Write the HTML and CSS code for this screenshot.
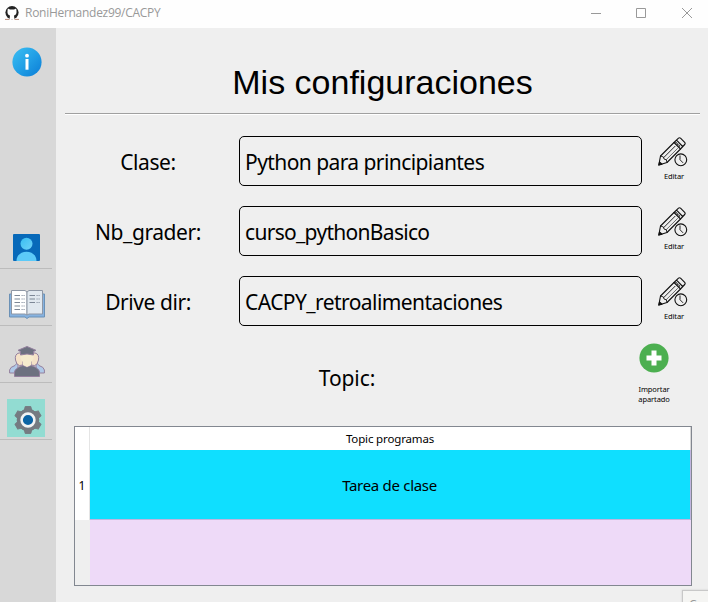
FILE: index.html
```html
<!DOCTYPE html>
<html lang="es">
<head>
<meta charset="utf-8">
<title>RoniHernandez99/CACPY</title>
<link rel="stylesheet" href="styles.css">
</head>
<body>
<svg width="0" height="0" class="defs">
  <defs>
    <linearGradient id="blue" x1="0" y1="0" x2="1" y2="1"><stop offset="0.2" stop-color="#32b3ee"/><stop offset="0.5" stop-color="#22a0e6"/><stop offset="1" stop-color="#0a7cd6"/></linearGradient>
    <linearGradient id="head" x1="0" y1="0" x2="1" y2="1"><stop offset="0" stop-color="#38bdf2"/><stop offset="1" stop-color="#6fd2f8"/></linearGradient>
    <symbol id="edit" viewBox="0 0 30 30">
      <g fill="none" stroke="#111" stroke-width="1.1" stroke-linejoin="round" stroke-linecap="round">
        <path d="M.8 28 2.500 19 16 5.500 22.500 12 9 25.500Z"/>
        <path d="M2.500 19 5.500 20 6 22 8.300 22.800 9 25.500M6 20.300 17 9.300" stroke-width=".9"/>
        <path d="M8.300 22.600 19.500 11.500" stroke-width=".6"/>
        <path d="M16 5.500 20.500 1.200Q21.500.300 22.500 1.200L26.700 5.400Q27.600 6.400 26.700 7.500L22.500 12M18.500 3.200 24.700 9.500"/>
        <path d="M17.800 5.300 22.500 10" stroke-dasharray=".8 1.500"/>
        <path d="M.8 28 1.500 25 4 27.200Z" fill="#111"/>
        <circle cx="22.800" cy="22.800" r="5.900" fill="#efefef"/>
        <path d="M22 18.800V22.700L24.800 25.600" stroke-width=".9"/>
      </g>
    </symbol>
  </defs>
</svg>
<header class="titlebar">
  <svg class="app-icon" viewBox="0 0 14 14"><rect width="14" height="14" fill="#fff"/><circle cx="7" cy="6.600" r="6.600" fill="#222"/><path d="M2.800 2.600 5 3.400H9L11.200 2.600 11.500 5Q11.900 8.800 9 9.400L9.400 13H4.600L5 9.400Q2.100 8.800 2.500 5Z" fill="#fff"/><path d="M0 13.400H4.500M9.500 13.400H14" stroke="#b98b79" stroke-width="1"/></svg>
  <span class="app-title">RoniHernandez99/CACPY</span>
  <svg class="controls" viewBox="0 0 104 14" fill="none" stroke="#999" stroke-width="1"><path d="M0 7.500H10M45.500 2.500H54.500V11.500H45.500ZM91 2 101 12M101 2 91 12"/></svg>
</header>
<div class="body">
  <nav class="sidebar">
    <div class="item info"><svg width="30" height="30" viewBox="0 0 30 30"><circle cx="15" cy="15" r="14.600" fill="url(#blue)"/><circle cx="15" cy="8.700" r="1.900" fill="#fff"/><path d="M13.500 12H16.500V22.700H13.500Z" fill="#fff"/></svg></div>
    <div class="item person"><svg width="27" height="27" viewBox="0 0 27 27"><rect width="27" height="27" rx="1" fill="#0769b9"/><circle cx="13.500" cy="9.700" r="6" fill="url(#head)"/><path d="M3.500 27C3.500 14.500 23.500 14.500 23.500 27Z" fill="#5ccaf8"/></svg></div>
    <div class="item"><svg width="36" height="30" viewBox="0 0 36 30"><path d="M.5 5H35.500V28H20L18 29.500 16 28H.5Z" fill="#86b2e0" stroke="#6b91b6"/><path d="M2.500 1.500H16L18 3V26L16 25H2.500Z" fill="#fff" stroke="#8e97a5"/><path d="M18 3 20 1.500H33.500V25H20L18 26Z" fill="#e1e8ef" stroke="#8e97a5"/><path d="M5.500 6.500H11M5.500 10H11M5.500 13.500H11M5.500 17H11M5.500 20.500H11M20.500 6.500H26M20.500 10H26M20.500 13.500H26" stroke="#7d8796" stroke-width="1.100"/><path d="M12.500 6.500H16M12.500 10H16M12.500 13.500H16M12.500 17H16M12.500 20.500H16M27.500 6.500H31M27.500 10H31M27.500 13.500H31" stroke="#8993a2" stroke-dasharray="1.200 .8"/></svg></div>
    <div class="item group"><svg width="36" height="33" viewBox="0 0 36 33"><g stroke="#94809e" stroke-width="1" stroke-linejoin="round"><path d="M.6 28V25Q1 22 6 20.500L9 17V28ZM35.400 28V25Q35 22 30 20.500L27 17V28Z" fill="#afc9e8"/><path d="M10 8Q5.500 9 6.500 15L8 19Q10 21.500 14 20V8ZM26 8Q30.500 9 29.500 15L28 19Q26 21.500 22 20V8Z" fill="#f5e2c8"/><path d="M5.500 31.500V27Q6 23 14 20.500L18 22 22 20.500Q30 23 30.500 27V31.500Z" fill="#6d7180"/></g><path d="M11.500 9Q10.500 14 14 17V20L18 22 22 20V17Q25.500 14 24.500 9Z" fill="#f6ebcd"/><path d="M9 5.300 18 1.500 27 5.300 24.500 6.500V10Q18 8 11.500 10V6.500Z" fill="#6d7180" stroke="#94809e" stroke-linejoin="round"/></svg></div>
    <div class="item gear"><div class="active"><svg width="30" height="30" viewBox="0 0 30 30"><g fill="#757b82" stroke="#757b82" stroke-linejoin="round"><circle cx="15" cy="15" r="10.800"/><path id="tooth" d="M8.500 7 11.300 5.500 12.200 1.600H17.800L18.700 5.500 21.500 7Z"/><use href="#tooth" transform="rotate(60 15 15)"/><use href="#tooth" transform="rotate(120 15 15)"/><use href="#tooth" transform="rotate(180 15 15)"/><use href="#tooth" transform="rotate(240 15 15)"/><use href="#tooth" transform="rotate(300 15 15)"/></g><circle cx="15" cy="15" r="6.400" fill="#0c64a5" stroke="#f1f3f4" stroke-width="2.600"/></svg></div></div>
  </nav>
  <main>
    <h1>Mis configuraciones</h1>
    <div class="row"><label>Clase:</label><div class="field">Python para principiantes</div><div class="edit"><svg><use href="#edit"/></svg>Editar</div></div>
    <div class="row"><label>Nb_grader:</label><div class="field grader">curso_pythonBasico</div><div class="edit"><svg><use href="#edit"/></svg>Editar</div></div>
    <div class="row last"><label>Drive dir:</label><div class="field">CACPY_retroalimentaciones</div><div class="edit"><svg><use href="#edit"/></svg>Editar</div></div>
    <div class="topic"><h2>Topic:</h2><div class="import"><svg width="30" height="30" viewBox="0 0 30 30"><circle cx="15" cy="15" r="14.600" fill="#4caf50"/><path d="M12.500 7.500H17.500V12.500H22.500V17.500H17.500V22.500H12.500V17.500H7.500V12.500H12.500Z" fill="#fff"/></svg>Importar<br>apartado</div></div>
    <div class="table">
      <div class="corner"></div><div class="th">Topic programas</div>
      <div class="num">1</div><div class="cell">Tarea de clase</div>
      <div class="gutter"></div><div class="empty"></div>
    </div>
  </main>
</div>
<div class="tip">Co</div>
</body>
</html>
```
FILE: styles.css
```css
* { box-sizing: border-box; }
body { margin: 0; width: 708px; height: 602px; overflow: hidden; position: relative; background: #efefef; color: #000; font-family: "Noto Sans", sans-serif; }
svg { display: block; flex: none; }
.defs { position: absolute; }
.titlebar { height: 28px; background: #fefefe; display: flex; align-items: center; padding: 0 15px 3px 5px; }
.app-icon { width: 14px; height: 14px; }
.app-title { margin-left: 6px; font: 12px/16px "Open Sans", sans-serif; letter-spacing: -0.28px; color: #999; }
.controls { width: 104px; height: 14px; margin-left: auto; margin-right: -2px; }
.body { display: flex; height: 574px; }
.sidebar { width: 56px; background: #d8d8d8; padding-top: 18px; }
.item { width: 52px; height: 57px; border-bottom: 1px solid #bcbcbc; display: flex; align-items: flex-end; justify-content: center; padding: 0 0 6px 1px; }
.item.info { height: 166px; border: 0; align-items: flex-start; padding-top: 0.5px; }
.item.person { padding-bottom: 7px; }
.item.group { padding-bottom: 4px; }
.item.gear { padding: 0 0 2px; }
.active { width: 38px; height: 38px; background: #92dcd2; display: flex; align-items: center; justify-content: center; padding-left: 3px; padding-top: 3px; }
main { flex: 1; min-width: 0; padding: 0 8px 0 9px; }
h1 { margin: 0 0 22px; height: 86px; border-bottom: 1px solid #a0a0a0; box-shadow: 0 1px #fff; padding: 34px 0 0; font: 34px/40px "Liberation Sans", sans-serif; text-align: center; }
.row { height: 50px; margin: 0 -6px 20px 0; display: flex; align-items: center; }
.row.last { margin-bottom: 17px; }
.row label { width: 166px; text-align: center; margin-right: 8px; padding-top: 2px; letter-spacing: -0.43px; }
.row, h2 { font-size: 21px; line-height: 30px; font-weight: 400; }
.field { flex: none; width: 403px; height: 50px; border: 1px solid #000; border-radius: 5px; padding: 2px 0 0 5px; display: flex; align-items: center; letter-spacing: -0.57px; }
.field.grader { letter-spacing: -0.7px; }
.edit { width: 64px; display: flex; flex-direction: column; align-items: center; font-size: 7.5px; line-height: 10px; letter-spacing: -0.1px; padding-bottom: 5px; }
.edit svg { width: 30px; height: 30px; margin: 0 2px 4px 0; }
.topic { display: flex; height: 83px; }
h2 { width: 564px; margin: 20px 0 0; text-align: center; letter-spacing: -0.1px; }
.import { width: 50px; display: flex; flex-direction: column; align-items: center; text-align: center; font-size: 7.5px; line-height: 10px; letter-spacing: -0.1px; }
.import svg { margin-bottom: 11px; }
.table { margin: 0 8px 0 9px; width: 618px; height: 160px; border: 1px solid #828790; display: grid; grid-template-columns: 15px 1fr; grid-template-rows: 23px 70px 1fr; }
.table > div { display: flex; align-items: center; justify-content: center; }
.corner, .num { background: #fff; border-right: 1px solid #e5e5e5; font-size: 12px; }
.th { background: #fff; font-size: 11.5px; letter-spacing: -0.15px; border-right: 1px solid #d8d8d8; }
.cell { background: #0fdfff; font-size: 15px; letter-spacing: -0.3px; border-right: 1px solid #c0b4df; border-bottom: 1px solid #c0b4df; padding-right: 1px; }
.empty { background: #eedaf8; }
.tip { position: absolute; left: 682px; top: 590px; width: 60px; height: 30px; border: 1px solid #c8c8c8; background: #f5f5f3; color: #999; font: 12px/16px "Open Sans", sans-serif; padding: 6px; box-shadow: 0 0 2px #ccc; }
```
